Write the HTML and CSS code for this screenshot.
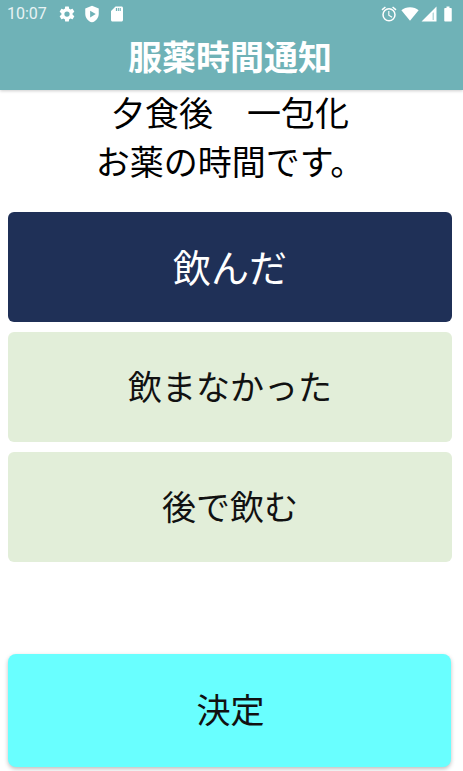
FILE: index.html
```html
<!DOCTYPE html>
<html lang="ja">
<head>
  <meta charset="UTF-8" />
  <meta name="viewport" content="width=device-width, initial-scale=1.0"/>
  <title>服薬時間通知</title>
  <link rel="stylesheet" href="styles.css">
</head>
<body>

  <div class="header">
    <div class="status-bar">
      <span class="clock">10:07</span>
      <svg class="icon gear" viewBox="0 0 24 24"><path d="M19.4 13c.05-.33.1-.66.1-1s-.05-.67-.1-1l2.1-1.65c.2-.15.25-.42.13-.64l-2-3.46c-.12-.22-.39-.3-.61-.22l-2.49 1a7.3 7.3 0 0 0-1.69-.98l-.38-2.65A.49.49 0 0 0 14 2h-4c-.25 0-.46.18-.49.42l-.38 2.65c-.61.25-1.17.59-1.69.98l-2.49-1c-.23-.09-.49 0-.61.22l-2 3.46c-.13.22-.07.49.12.64L4.57 11c-.05.33-.07.66-.07 1s.02.67.07 1l-2.11 1.65c-.19.15-.25.42-.12.64l2 3.46c.12.22.38.3.61.22l2.49-1c.52.4 1.08.73 1.69.98l.38 2.65c.03.24.24.42.49.42h4c.25 0 .46-.18.49-.42l.38-2.65c.61-.25 1.17-.59 1.69-.98l2.49 1c.23.09.49 0 .61-.22l2-3.46c.12-.22.07-.49-.13-.64L19.4 13zM12 15.5a3.5 3.5 0 1 1 0-7 3.5 3.5 0 0 1 0 7z"/></svg>
      <svg class="icon shield" viewBox="0 0 24 24"><path fill-rule="evenodd" d="M12 1 3 4.500v7c0 5.500 3.800 10.200 9 11.500 5.200-1.300 9-6 9-11.500v-7L12 1zM9.500 7.500v9l7.500-4.500-7.500-4.500z"/></svg>
      <svg class="icon sd" viewBox="0 0 24 24"><path fill-rule="evenodd" d="M18 2h-8L4 8v12c0 1.100.9 2 2 2h12c1.100 0 2-.9 2-2V4c0-1.100-.9-2-2-2zM12 8h-1.500V4H12v4zm2.500 0H13V4h1.500v4zM17 8h-1.500V4H17v4z"/></svg>
      <span class="spacer"></span>
      <svg class="icon alarm" viewBox="0 0 24 24"><path d="M22 5.700 17.400 1.900l-1.300 1.500 4.600 3.900L22 5.700zM7.900 3.400 6.600 1.900 2 5.700l1.300 1.500 4.600-3.800zM12.500 8H11v6l4.700 2.900.8-1.200-4-2.400V8zM12 4a9 9 0 1 0 0 18 9 9 0 0 0 0-18zm0 16a7 7 0 1 1 0-14 7 7 0 0 1 0 14z"/></svg>
      <svg class="icon wifi" viewBox="0 0 24 24"><path d="M12 21 .5 7C3.500 4.500 7.500 3 12 3s8.500 1.500 11.500 4L12 21z"/></svg>
      <svg class="icon signal" viewBox="0 0 24 24"><path fill-rule="evenodd" d="M2 22 22 2v20H2zm16-2V9.500L17 10.500V20h1z"/></svg>
      <svg class="icon battery" viewBox="0 0 24 24"><path d="M16 4h-2V2h-4v2H8c-.6 0-1 .4-1 1v16c0 .6.400 1 1 1h8c.6 0 1-.4 1-1V5c0-.6-.4-1-1-1z"/></svg>
    </div>
    <h1 class="title">服薬時間通知</h1>
  </div>

  <div class="message">
    <p>夕食後　一包化</p>
    <p>お薬の時間です。</p>
  </div>

  <div class="choices">
    <button class="choice selected">飲んだ</button>
    <button class="choice">飲まなかった</button>
    <button class="choice">後で飲む</button>
  </div>

  <button class="decide">決定</button>

</body>
</html>
```

FILE: styles.css
```css
* {
  box-sizing: border-box;
}

html,
body {
  height: 100%;
}

body {
  margin: 0;
  height: 771px;
  overflow: hidden;
  background-color: #fff;
  color: #111;
  display: flex;
  flex-direction: column;
  font-family: "Noto Sans CJK JP", "Noto Sans", sans-serif;
}

.header {
  height: 90px;
  background-color: #6fb2b7;
  box-shadow: 0 1px 3px rgba(0, 0, 0, 0.2);
  color: #fff;
}

.status-bar {
  height: 26px;
  padding: 1px 6px 0 7px;
  display: flex;
  align-items: center;
}

.clock {
  font-family: Roboto, sans-serif;
  font-size: 16px;
  margin-right: 11px;
  color: #e8f3f4;
}

.spacer {
  flex: 1;
}

.icon {
  width: 18px;
  height: 18px;
  fill: #fff;
  margin-right: 7px;
}

.alarm {
  margin-right: 3px;
}

.wifi {
  margin-right: 1px;
}

.signal {
  margin-right: 1px;
}

.battery {
  margin-right: 0;
}

.title {
  margin: 0;
  padding: 7px 3px 0 0;
  font-size: 34px;
  line-height: 46px;
  font-weight: 700;
  text-align: center;
}

.message {
  text-align: center;
  font-size: 34px;
  line-height: 49px;
  height: 121px;
  padding-right: 3px;
  color: #000;
  margin-top: -3px;
  margin-bottom: 4px;
}

.message p {
  margin: 0;
}

.choices {
  display: flex;
  flex-direction: column;
  gap: 10px;
  padding: 0 11px 0 8px;
}

.choice {
  height: 110px;
  padding-bottom: 4px;
  border: none;
  border-radius: 6px;
  background-color: #e2eed9;
  color: #111;
  font-family: inherit;
  font-size: 34px;
}

.choice.selected {
  background-color: #1f3057;
  color: #fff;
  font-size: 38px;
}

.decide {
  margin: 92px 12px 0 8px;
  height: 113px;
  padding: 0 0 5px 2px;
  border: none;
  border-radius: 8px;
  background-color: #69ffff;
  box-shadow: 0 2px 4px rgba(0, 0, 0, 0.25);
  color: #111;
  font-family: inherit;
  font-size: 34px;
}
```
